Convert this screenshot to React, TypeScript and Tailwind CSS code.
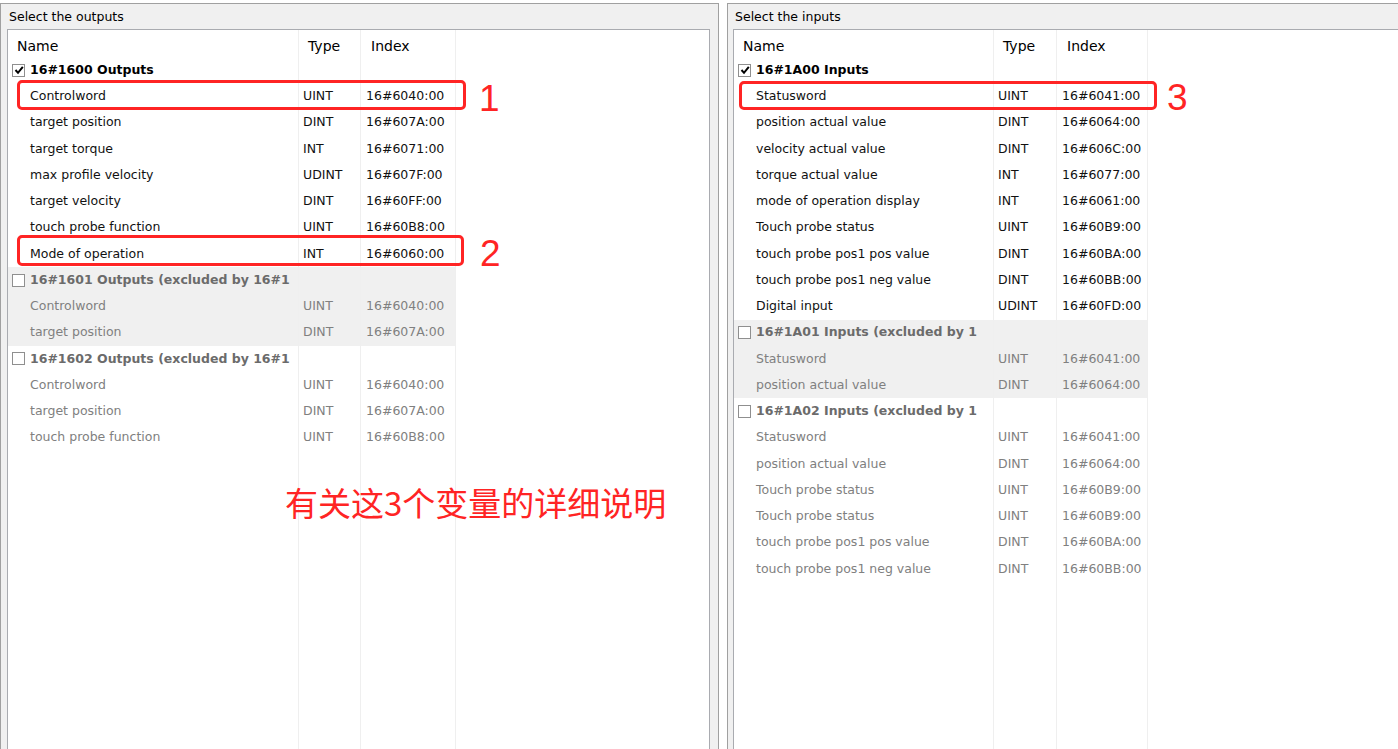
type Entry = [string, string, string];

type Group = {
  label: string;
  checked: boolean;
  shaded: boolean;
  entries: Entry[];
};

const outputs: Group[] = [
  {
    label: '16#1600 Outputs',
    checked: true,
    shaded: false,
    entries: [
      ['Controlword', 'UINT', '16#6040:00'],
      ['target position', 'DINT', '16#607A:00'],
      ['target torque', 'INT', '16#6071:00'],
      ['max profile velocity', 'UDINT', '16#607F:00'],
      ['target velocity', 'DINT', '16#60FF:00'],
      ['touch probe function', 'UINT', '16#60B8:00'],
      ['Mode of operation', 'INT', '16#6060:00'],
    ],
  },
  {
    label: '16#1601 Outputs (excluded by 16#1',
    checked: false,
    shaded: true,
    entries: [
      ['Controlword', 'UINT', '16#6040:00'],
      ['target position', 'DINT', '16#607A:00'],
    ],
  },
  {
    label: '16#1602 Outputs (excluded by 16#1',
    checked: false,
    shaded: false,
    entries: [
      ['Controlword', 'UINT', '16#6040:00'],
      ['target position', 'DINT', '16#607A:00'],
      ['touch probe function', 'UINT', '16#60B8:00'],
    ],
  },
];

const inputs: Group[] = [
  {
    label: '16#1A00 Inputs',
    checked: true,
    shaded: false,
    entries: [
      ['Statusword', 'UINT', '16#6041:00'],
      ['position actual value', 'DINT', '16#6064:00'],
      ['velocity actual value', 'DINT', '16#606C:00'],
      ['torque actual value', 'INT', '16#6077:00'],
      ['mode of operation display', 'INT', '16#6061:00'],
      ['Touch probe status', 'UINT', '16#60B9:00'],
      ['touch probe pos1 pos value', 'DINT', '16#60BA:00'],
      ['touch probe pos1 neg value', 'DINT', '16#60BB:00'],
      ['Digital input', 'UDINT', '16#60FD:00'],
    ],
  },
  {
    label: '16#1A01 Inputs (excluded by 1',
    checked: false,
    shaded: true,
    entries: [
      ['Statusword', 'UINT', '16#6041:00'],
      ['position actual value', 'DINT', '16#6064:00'],
    ],
  },
  {
    label: '16#1A02 Inputs (excluded by 1',
    checked: false,
    shaded: false,
    entries: [
      ['Statusword', 'UINT', '16#6041:00'],
      ['position actual value', 'DINT', '16#6064:00'],
      ['Touch probe status', 'UINT', '16#60B9:00'],
      ['Touch probe status', 'UINT', '16#60B9:00'],
      ['touch probe pos1 pos value', 'DINT', '16#60BA:00'],
      ['touch probe pos1 neg value', 'DINT', '16#60BB:00'],
    ],
  },
];

function Check({ on }: { on: boolean }) {
  return (
    <span className="w-[13px] h-[13px] border border-[#8f8f8f] bg-white flex items-center justify-center shrink-0">
      {on && (
        <svg width="10" height="10" viewBox="0 0 10 10">
          <path d="M1.5 5 L4 7.8 L8.8 1.8" stroke="#000" strokeWidth="2" fill="none" />
        </svg>
      )}
    </span>
  );
}

function Cell({ shaded, last, children, className = '' }: { shaded?: boolean; last?: boolean; children?: React.ReactNode; className?: string }) {
  return (
    <div
      className={`h-full flex items-center overflow-hidden whitespace-nowrap ${last ? '' : 'border-r border-[#efefef]'} ${shaded ? 'bg-[#f0f0f0]' : ''} ${className}`}
    >
      {children}
    </div>
  );
}

function MappingPanel({ title, cols, groups, className }: { title: string; cols: string; groups: Group[]; className: string }) {
  return (
    <div className={`h-full flex flex-col bg-[#f0f0f0] border-t border-x border-[#a0a0a0] ${className}`}>
      <div className="h-[25px] shrink-0 pl-[2px] pt-[1px] flex items-center text-[12.5px] text-black">{title}</div>
      <div className="flex-1 flex flex-col bg-white border border-b-0 border-[#a9abb0] overflow-hidden">
        <div className={`grid ${cols} h-[27px] shrink-0 text-[14px] text-black`}>
          <Cell className="pl-[9px] pt-[5px] border-[#e6e6e6]">Name</Cell>
          <Cell className="pl-[9px] pt-[5px] border-[#e6e6e6]">Type</Cell>
          <Cell className="pl-[10px] pt-[5px] border-[#e6e6e6]">Index</Cell>
          <Cell last />
        </div>

        {groups.map(g => (
          <div key={g.label}>
            <div className={`grid ${cols} h-[26.25px]`}>
              <Cell shaded={g.shaded} className="pl-[4px] gap-[5px]">
                <Check on={g.checked} />
                <span className={`font-bold text-[12.5px] ${g.checked ? 'text-black' : 'text-[#6b6b6b]'}`}>{g.label}</span>
              </Cell>
              <Cell shaded={g.shaded} />
              <Cell shaded={g.shaded} />
              <Cell last />
            </div>
            {g.entries.map(([name, type, index], i) => {
              const tone = g.checked ? 'text-[#111]' : 'text-[#808080]';
              return (
                <div key={i} className={`grid ${cols} h-[26.25px] text-[12.5px] ${tone}`}>
                  <Cell shaded={g.shaded} className="pl-[22px]">{name}</Cell>
                  <Cell shaded={g.shaded} className="pl-[4px]">{type}</Cell>
                  <Cell shaded={g.shaded} className="pl-[5px]">{index}</Cell>
                  <Cell last />
                </div>
              );
            })}
          </div>
        ))}

        <div className={`flex-1 grid ${cols}`}>
          <Cell />
          <Cell />
          <Cell />
          <Cell last />
        </div>
      </div>
    </div>
  );
}

export default function App() {
  return (
    <div className="relative w-[1398px] h-[749px] overflow-hidden bg-white pt-[3px] flex font-['DejaVu_Sans',sans-serif]">
      <MappingPanel
        title="Select the outputs"
        cols="grid-cols-[291px_62px_95px_1fr]"
        groups={outputs}
        className="w-[719px] shrink-0 pl-[6px] pr-[8px]"
      />
      <MappingPanel
        title="Select the inputs"
        cols="grid-cols-[260px_63px_91px_1fr]"
        groups={inputs}
        className="w-[700px] shrink-0 ml-[8px] pl-[5px] pr-[8px]"
      />

      {/* red callouts drawn over the lists */}
      <div className="absolute left-[17px] top-[80px] w-[449px] h-[30px] border-[3px] border-[#ff2424] rounded-[5px]" />
      <div className="absolute left-[17px] top-[235px] w-[447px] h-[31px] border-[3px] border-[#ff2424] rounded-[5px]" />
      <div className="absolute left-[739px] top-[81px] w-[418px] h-[29px] border-[3px] border-[#ff2424] rounded-[5px]" />

      <span className="absolute left-[479px] top-[80px] text-[37px] leading-none text-[#ff2424] font-['Liberation_Sans',sans-serif]">1</span>
      <span className="absolute left-[480px] top-[235px] text-[37px] leading-none text-[#ff2424] font-['Liberation_Sans',sans-serif]">2</span>
      <span className="absolute left-[1167px] top-[79px] text-[37px] leading-none text-[#ff2424] font-['Liberation_Sans',sans-serif]">3</span>

      <span className="absolute left-[285px] top-[486px] text-[33px] leading-none text-[#ff2424] whitespace-nowrap font-['Noto_Sans_CJK_SC',sans-serif]">
        有关这3个变量的详细说明
      </span>
    </div>
  );
}
